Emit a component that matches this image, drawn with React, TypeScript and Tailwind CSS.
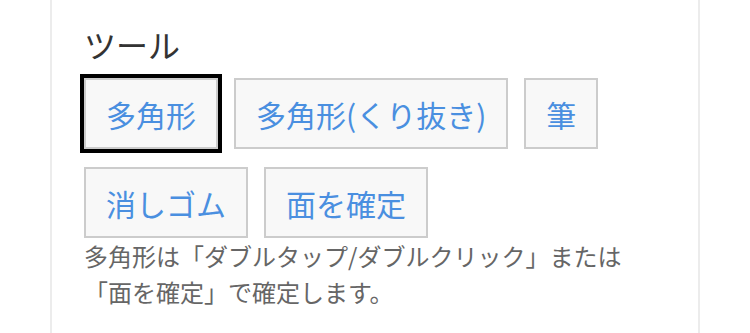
import React, { useState } from "react";

const tools = ["多角形", "多角形(くり抜き)", "筆", "消しゴム", "面を確定"];

function App() {
  const [active, setActive] = useState("多角形");

  return (
    <div
      className="w-[750px] h-[333px] bg-white overflow-hidden"
      style={{ fontFamily: '"Noto Sans CJK JP", "Noto Sans", sans-serif' }}
    >
      <div className="ml-[50px] w-[650px] h-full border-x-2 border-[#ececec] pl-8 pr-8 pt-[25px]">
        <h2 className="text-[32px] leading-[38px] text-[#333] font-normal mb-[15px]">ツール</h2>

        <div className="flex flex-wrap gap-x-4 gap-y-[18px]">
          {tools.map((t) => (
            <button
              key={t}
              onClick={() => setActive(t)}
              className={
                "h-[71px] px-[20px] border-2 border-[#cccccc] bg-[#f8f8f8] text-[30px] leading-[40px] text-[#4a8fe0] whitespace-nowrap " +
                (active === t ? "outline-4 outline-black" : "")
              }
            >
              {t}
            </button>
          ))}
        </div>

        <p className="text-[24px] leading-[36px] text-[#666]">
          多角形は「ダブルタップ/ダブルクリック」または
          <br />
          「面を確定」で確定します。
        </p>
      </div>
    </div>
  );
}

export default App;
